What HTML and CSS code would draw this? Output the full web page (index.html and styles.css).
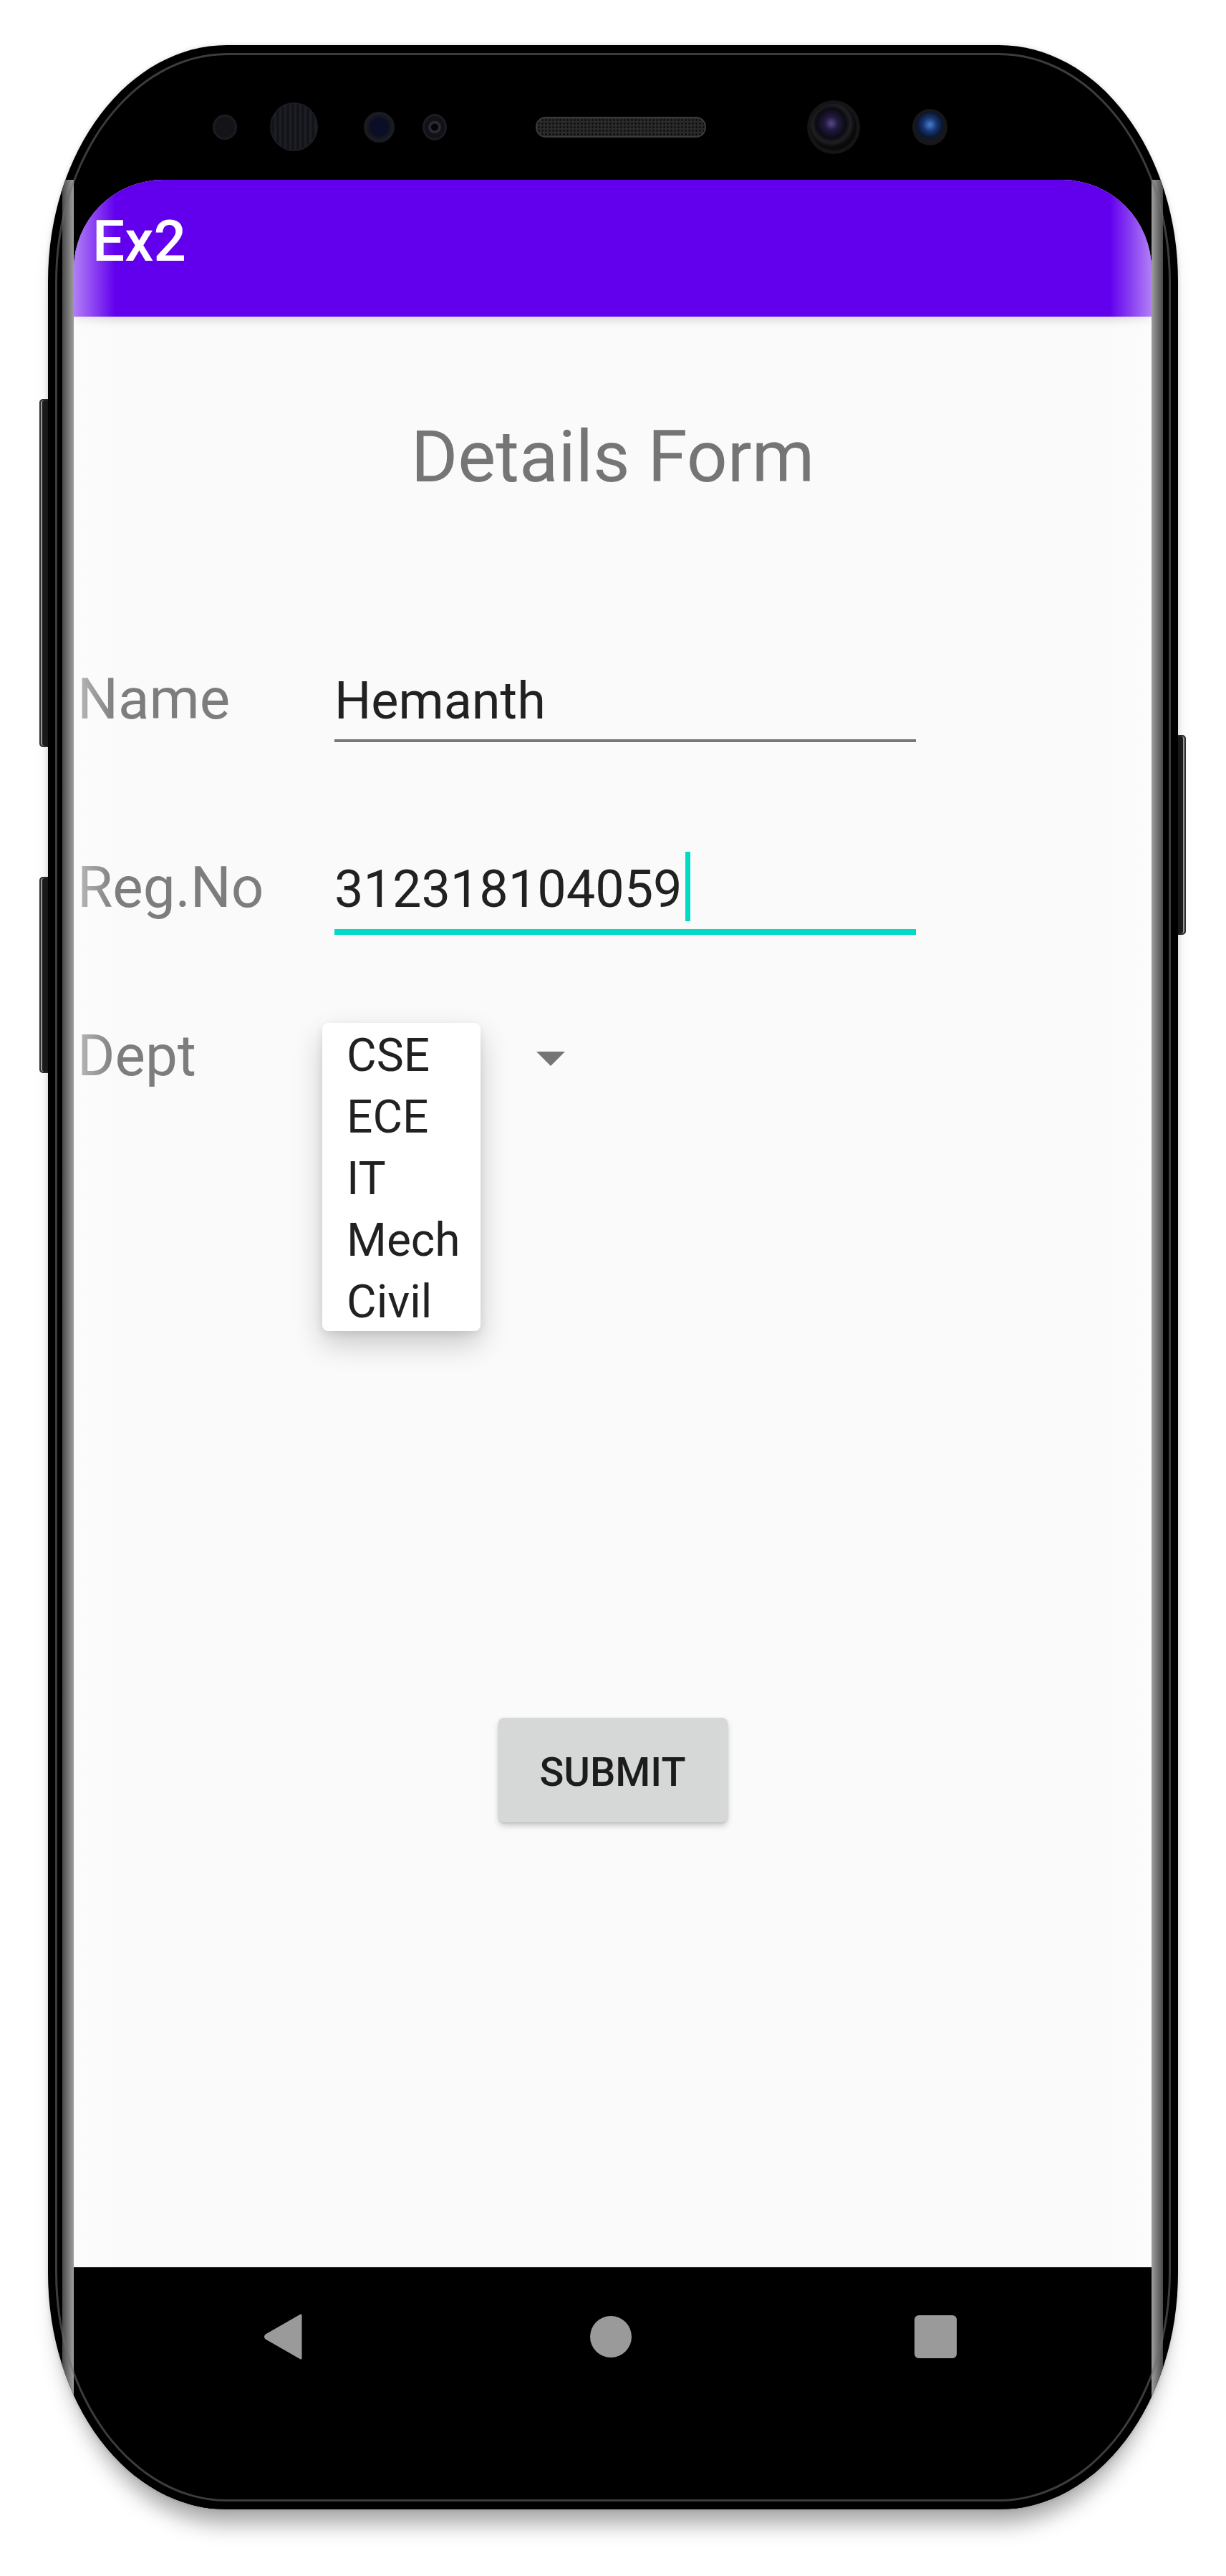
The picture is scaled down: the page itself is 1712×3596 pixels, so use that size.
FILE: index.html
```html
<html>
<head>
  <meta charset="UTF-8">
  <title>Ex2</title>
  <link rel="stylesheet" href="styles.css">
</head>
<body>
  <div class="device">
    <span class="key key-left-top"></span>
    <span class="key key-left-bottom"></span>
    <span class="key key-right"></span>

    <div class="phone">
      <div class="bezel">
        <div class="cam-row">
          <span class="dot dot-a"></span>
          <span class="dot dot-b"></span>
          <span class="dot dot-c"></span>
          <span class="dot dot-d"></span>
          <span class="speaker"></span>
          <span class="dot lens"></span>
          <span class="dot sensor"></span>
        </div>
      </div>

      <div class="glass">
        <div class="screen">
          <div class="appbar">Ex2</div>

          <div class="content">
            <h1 class="title">Details Form</h1>

            <div class="row row-name">
              <div class="label">Name</div>
              <div class="field">Hemanth</div>
            </div>

            <div class="row row-reg">
              <div class="label">Reg.No</div>
              <div class="field focus">312318104059<span class="caret"></span></div>
            </div>

            <div class="row row-dept">
              <div class="label label-dept">Dept</div>
              <div class="spinner">
                <span class="arrow"></span>
                <ul class="popup">
                  <li>CSE</li>
                  <li>ECE</li>
                  <li>IT</li>
                  <li>Mech</li>
                  <li>Civil</li>
                </ul>
              </div>
            </div>

            <button class="submit">SUBMIT</button>
          </div>
        </div>

        <div class="nav">
          <svg class="nav-back" width="54" height="64" viewBox="0 0 54 64">
            <path d="M52 2 L52 62 L4 34.5 Q1 32 4 29.5 Z" fill="#9a9a9a" stroke="#9a9a9a" stroke-width="3" stroke-linejoin="round"/>
          </svg>
          <span class="nav-home"></span>
          <span class="nav-recent"></span>
        </div>
      </div>
    </div>
  </div>
</body>
</html>
```

FILE: styles.css
```css
html, body {
  margin: 0;
  width: 1712px;
  height: 3596px;
  overflow: hidden;
  background: #fff;
}
body {
  padding: 63px 0 0 67px;
  box-sizing: border-box;
  font-family: Roboto, "Liberation Sans", sans-serif;
}

.device {
  position: relative;
  width: 1578px;
  height: 3440px;
}

/* hardware keys on the sides */
.key {
  position: absolute;
  width: 10px;
  background: #1c1c1c;
  border: 2px solid #2e2e2e;
  box-shadow: inset 2px 0 0 #9a9a9a;
}
.key-left-top {
  left: -12px;
  top: 494px;
  height: 482px;
  border-radius: 5px 0 0 5px;
}
.key-left-bottom {
  left: -12px;
  top: 1161px;
  height: 270px;
  border-radius: 5px 0 0 5px;
}
.key-right {
  right: -11px;
  top: 963px;
  height: 275px;
  border-radius: 0 5px 5px 0;
  box-shadow: inset -2px 0 0 #9a9a9a;
}

.phone {
  position: relative;
  width: 1578px;
  height: 3440px;
  background: #000;
  border-radius: 250px / 330px;
  overflow: hidden;
  box-shadow: 0 34px 30px -14px rgba(0, 0, 0, .35), 0 0 6px rgba(0, 0, 0, .15);
}
.phone:after {
  content: '';
  position: absolute;
  top: 11px;
  left: 10px;
  right: 10px;
  bottom: 11px;
  border: 3px solid rgba(110, 110, 110, .55);
  border-radius: 240px / 320px;
  pointer-events: none;
}

/* top bezel */
.bezel {
  height: 188px;
  padding-top: 76px;
  box-sizing: border-box;
}
.cam-row {
  display: flex;
  align-items: center;
  height: 76px;
}
.dot {
  display: block;
  flex: none;
  border-radius: 50%;
  box-sizing: border-box;
}
.dot-a {
  width: 34px;
  height: 35px;
  margin-left: 230px;
  background: #141418;
  box-shadow: inset 0 0 5px #2c2c33;
}
.dot-b {
  width: 67px;
  height: 68px;
  margin-left: 46px;
  border: 2px solid #1c1c24;
  background: repeating-linear-gradient(90deg, #131318 0 4px, #1e1e27 4px 7px);
}
.dot-c {
  width: 43px;
  height: 43px;
  margin-left: 64px;
  border: 5px solid #1a1a22;
  background: radial-gradient(circle, #0a0e26 0 55%, #15151b 60%);
}
.dot-d {
  width: 34px;
  height: 37px;
  margin-left: 39px;
  border: 3px solid #1c1c23;
  background: radial-gradient(circle, #050505 0 22%, #2a2a34 26% 40%, #111117 44%);
}
.speaker {
  display: block;
  flex: none;
  width: 238px;
  height: 29px;
  margin-left: 124px;
  border-radius: 14px;
  border: 2px solid #3a3a3a;
  box-sizing: border-box;
  background-color: #2a2a2a;
  background-image: radial-gradient(#0e0e0e 1px, transparent 1.6px);
  background-size: 5px 5px;
}
.lens {
  width: 74px;
  height: 75px;
  margin-left: 141px;
  border: 5px solid #151515;
  background: radial-gradient(circle at 45% 42%, #5a4888 0, #221a40 18%, #0b0b12 40%, #1f1f24 52%, #0a0a0a 64%);
}
.sensor {
  width: 49px;
  height: 51px;
  margin-left: 73px;
  border: 4px solid #17171b;
  background: radial-gradient(circle at 50% 42%, #4a80d0 0, #163572 30%, #0b1630 55%, #18181e 70%);
}

/* glass area: screen plus navigation bar, with curved gray edges */
.glass {
  margin: 0 21px 0 20px;
  padding: 0 16px;
  background: linear-gradient(90deg, #4a4a4a 0, #9e9e9e 16px, #000 16px, #000 calc(100% - 16px), #9e9e9e calc(100% - 16px), #4a4a4a 100%);
}

.screen {
  position: relative;
  height: 2914px;
  background: #fafafa;
  border-radius: 125px 125px 0 0;
  overflow: hidden;
}
.screen:after {
  content: '';
  position: absolute;
  top: 0;
  left: 0;
  right: 0;
  bottom: 0;
  background: linear-gradient(90deg, rgba(255, 255, 255, .5) 0, rgba(255, 255, 255, 0) 58px, rgba(255, 255, 255, 0) calc(100% - 58px), rgba(255, 255, 255, .5) 100%);
  pointer-events: none;
  z-index: 5;
}

.appbar {
  position: relative;
  z-index: 1;
  height: 191px;
  padding: 39px 0 0 26px;
  box-sizing: border-box;
  background: #6200ee;
  color: #fff;
  font-size: 80px;
  font-weight: 500;
  line-height: 94px;
  box-shadow: 0 4px 12px rgba(0, 0, 0, .16);
}

.content {
  padding-top: 137px;
}
.title {
  margin: 0;
  font-size: 100px;
  font-weight: 400;
  line-height: 118px;
  color: #757575;
  text-align: center;
}

.row {
  display: flex;
  align-items: baseline;
}
.row-name {
  margin-top: 232px;
}
.row-reg {
  margin-top: 156px;
}
.row-dept {
  margin-top: 122px;
  align-items: flex-start;
}
.label {
  flex: none;
  width: 364px;
  padding-left: 5px;
  box-sizing: border-box;
  font-size: 80px;
  line-height: 94px;
  color: #7d7d7d;
}
.label-dept {
  width: 347px;
}
.field {
  flex: none;
  width: 812px;
  font-size: 72px;
  line-height: 84px;
  color: #212121;
  padding-bottom: 11px;
  border-bottom: 4px solid #777;
}
.field.focus {
  border-bottom: 8px solid #03dac5;
}
.caret {
  display: inline-block;
  width: 7px;
  height: 97px;
  margin: -16px 0 0 4px;
  vertical-align: -20px;
  background: #03dac5;
}

.spinner {
  position: relative;
  width: 360px;
  height: 94px;
}
.arrow {
  display: block;
  width: 0;
  height: 0;
  margin: 41px 0 0 299px;
  border-left: 20px solid transparent;
  border-right: 20px solid transparent;
  border-top: 20px solid #757575;
}
.popup {
  position: absolute;
  left: 0;
  top: 1px;
  z-index: 3;
  width: 221px;
  height: 430px;
  margin: 0;
  padding: 3px 0 0 34px;
  box-sizing: border-box;
  list-style: none;
  background: #fff;
  border-radius: 8px;
  box-shadow: 0 18px 40px rgba(0, 0, 0, .2), 0 4px 12px rgba(0, 0, 0, .08);
  font-size: 64px;
  line-height: 86px;
  color: #212121;
}

.submit {
  display: block;
  width: 320px;
  height: 146px;
  margin: 877px auto 0;
  padding: 6px 0 0;
  border: 0;
  border-radius: 8px;
  background: #d6d7d7;
  box-shadow: 0 5px 8px rgba(0, 0, 0, .18), 0 1px 3px rgba(0, 0, 0, .14);
  font-family: Roboto, "Liberation Sans", sans-serif;
  font-size: 56px;
  font-weight: 500;
  line-height: 140px;
  color: #1c1c1c;
  box-sizing: border-box;
}

/* navigation bar */
.nav {
  height: 337px;
  background: #000;
  display: flex;
  align-items: center;
  padding: 65px 0 0 265px;
  box-sizing: border-box;
  align-content: flex-start;
  flex-wrap: wrap;
}
.nav-back {
  display: block;
  flex: none;
}
.nav-home {
  display: block;
  flex: none;
  width: 58px;
  height: 58px;
  margin-left: 402px;
  border-radius: 50%;
  background: #9a9a9a;
}
.nav-recent {
  display: block;
  flex: none;
  width: 59px;
  height: 60px;
  margin-left: 395px;
  border-radius: 6px;
  background: #9a9a9a;
}
```
